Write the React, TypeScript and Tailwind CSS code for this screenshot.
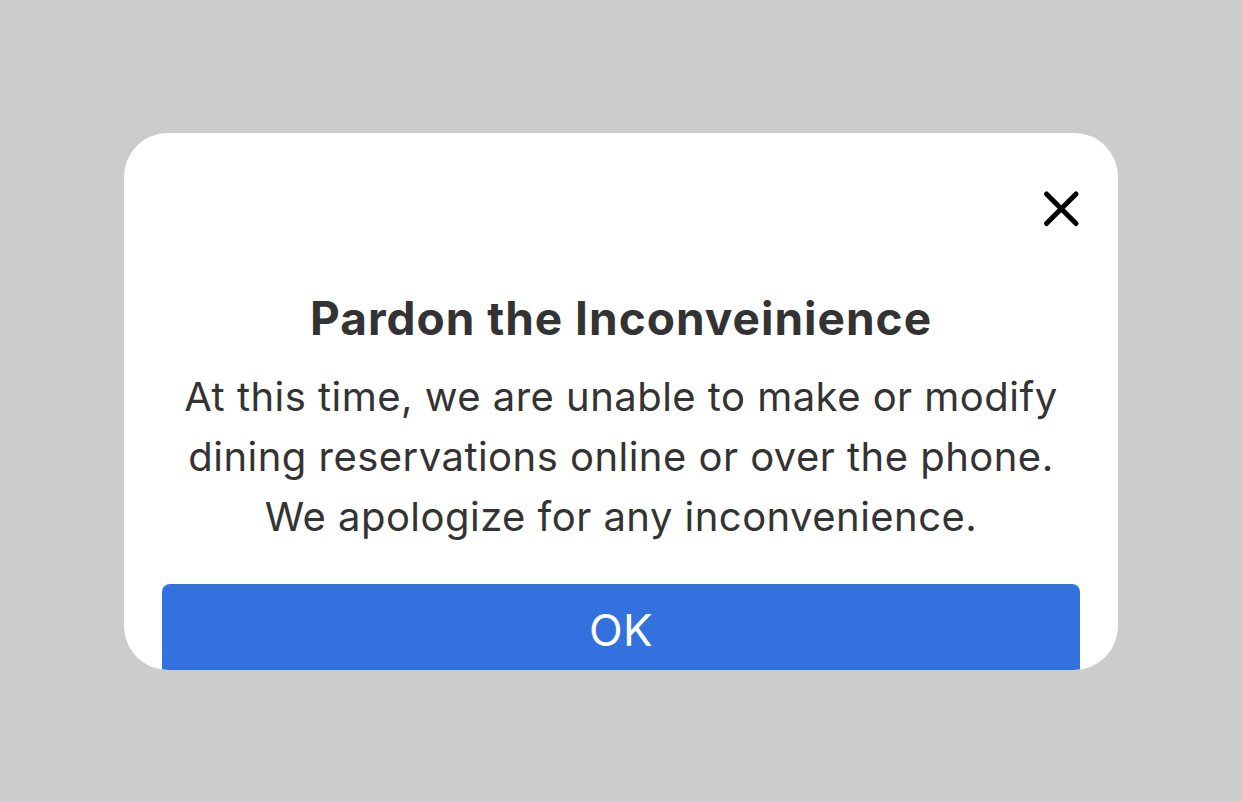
export default function App() {
  return (
    <div className="min-h-screen w-full bg-[#cccccc] flex items-center justify-center font-['Inter',sans-serif]">
      <div className="w-[994px] h-[537px] bg-white rounded-[44px] overflow-hidden flex flex-col">
        <div className="pt-[55px] pr-[37px] flex justify-end">
          <button aria-label="Close" className="w-10 h-10 flex items-center justify-center">
            <svg viewBox="0 0 40 40" className="w-10 h-10" fill="none" stroke="#000" strokeWidth={5} strokeLinecap="round">
              <path d="M5.5 6 35 35.5M35 6 5.5 35.5" />
            </svg>
          </button>
        </div>

        <h2 className="mt-16 text-center text-[46px] leading-[52px] tracking-[1px] font-bold text-[#333333]">
          Pardon the Inconveinience
        </h2>
        <p className="mt-[23px] text-center text-[40px] leading-[60px] tracking-[0.47px] text-[#333333]">
          At this time, we are unable to make or modify
          <br />
          dining reservations online or over the phone.
          <br />
          We apologize for any inconvenience.
        </p>

        <div className="px-[38px] mt-[37px]">
          <button className="w-full h-[92px] rounded-lg bg-[#3371de] text-white text-[44px] leading-none tracking-[0.5px]">
            OK
          </button>
        </div>
      </div>
    </div>
  );
}
